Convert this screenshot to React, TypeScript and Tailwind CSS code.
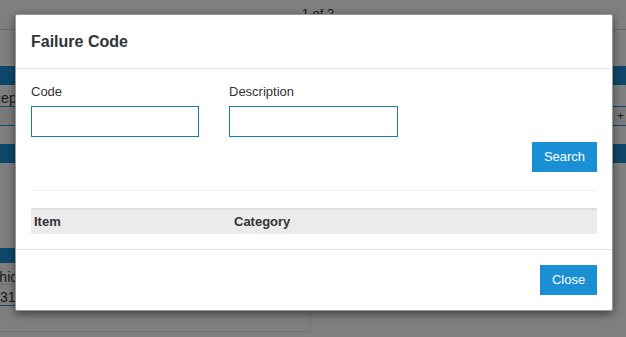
export default function App() {
  return (
    <div className="relative w-[626px] h-[337px] overflow-hidden bg-white font-['Liberation_Sans',Arial,sans-serif] text-[#333]">
      {/* page behind the dialog */}
      <div className="flex flex-col">
        <div className="h-[30px] border-b border-[#d0d0d0] flex justify-center items-start pt-[4px] text-[13px]">
          <span className="pl-[10px]">1 of 2</span>
        </div>
        <div className="flex gap-[9px] pt-[36px]">
          <div className="w-[311px] flex flex-col">
            <div className="h-[19px] bg-[#1a8fd4]" />
            <div className="h-[22px] border-b border-[#1a8fd4] text-[14px] pt-[3px] w-[15px] overflow-hidden">
              <span className="block -ml-[9px] whitespace-nowrap">Repair</span>
            </div>
            <div className="h-[19px] border-b border-[#1a8fd4] bg-[#f4f4f4]" />
            <div className="h-[18px]" />
            <div className="h-[19px] bg-[#1a8fd4]" />
            <div className="h-[85px]" />
            <div className="border-r border-b border-[#e8e8e8] flex flex-col pb-[25px]">
              <div className="h-[15px] bg-[#1a8fd4]" />
              <div className="h-[22px] border-b border-[#e0e0e0] text-[14px] pt-[4px] w-[15px] overflow-hidden">
                <span className="block -ml-[17px] whitespace-nowrap">Vehicle</span>
              </div>
              <div className="h-[21px] border-b border-[#1a8fd4] text-[14px] pt-[2px] w-[15px] overflow-hidden">
                <span className="block whitespace-nowrap">315</span>
              </div>
            </div>
          </div>
          <div className="flex-1 flex flex-col">
            <div className="h-[19px] bg-[#1a8fd4]" />
            <div className="h-[22px] border-b border-[#1a8fd4]" />
            <div className="h-[19px] border-b border-[#1a8fd4] bg-[#f4f4f4] flex justify-end pr-[2px] text-[12px]">+</div>
            <div className="h-[18px]" />
            <div className="h-[19px] bg-[#1a8fd4]" />
          </div>
        </div>
      </div>

      {/* backdrop */}
      <div className="absolute inset-0 bg-black/50" />

      {/* dialog */}
      <div className="absolute left-[15px] top-[14px] w-[598px] h-[297px] bg-white rounded-[2px] border border-[#999] shadow-[0_3px_9px_rgba(0,0,0,0.5)] flex flex-col">
        <div className="h-[54px] border-b border-[#e5e5e5] flex items-center px-[15px]">
          <h4 className="text-[16px] font-bold text-[#333]">Failure Code</h4>
        </div>
        <div className="px-[15px] pt-[15px] pb-[15px] flex flex-col border-b border-[#e5e5e5]">
          <div className="flex gap-[30px]">
            <div className="flex flex-col">
              <label className="text-[13px] h-[16px] leading-[16px] mb-[6px]">Code</label>
              <input className="w-[168px] h-[31px] border border-[#1a7ab8] outline-none px-2 text-[13px]" />
            </div>
            <div className="flex flex-col">
              <label className="text-[13px] h-[16px] leading-[16px] mb-[6px]">Description</label>
              <input className="w-[169px] h-[31px] border border-[#1a7ab8] outline-none px-2 text-[13px]" />
            </div>
          </div>
          <div className="flex justify-end mt-[5px]">
            <button className="w-[65px] h-[30px] bg-[#1a8fd3] text-white text-[13px]">Search</button>
          </div>
          <div className="h-px bg-[#eeeeee] mt-[18px]" />
          <div className="mt-[17px] h-[26px] bg-[#ebebeb] border-t-2 border-[#dddddd] flex items-center text-[13px] font-bold">
            <div className="w-[203px] pl-[3px]">Item</div>
            <div>Category</div>
          </div>
        </div>
        <div className="flex-1 flex justify-end items-start px-[15px] pt-[15px]">
          <button className="w-[57px] h-[30px] bg-[#1a8fd3] text-white text-[13px]">Close</button>
        </div>
      </div>
    </div>
  )
}
